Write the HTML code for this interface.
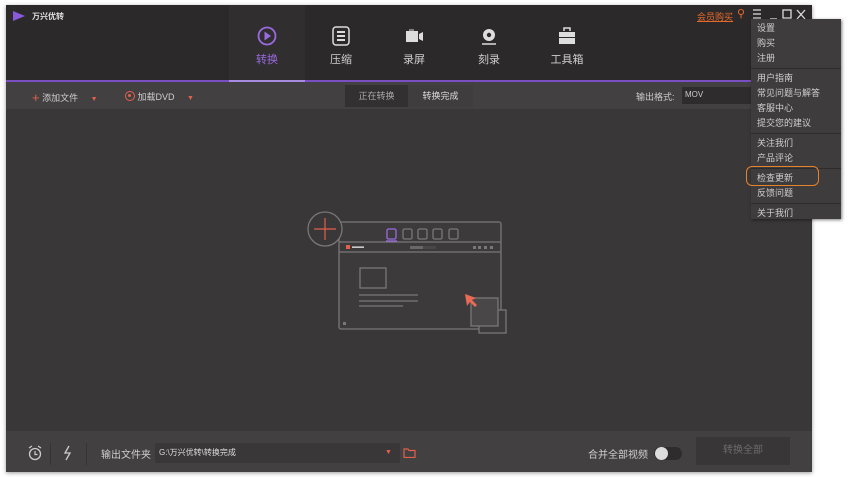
<!DOCTYPE html>
<html><head><meta charset="utf-8"><style>
*{margin:0;padding:0;box-sizing:border-box}
body{width:850px;height:477px;background:#fff;position:relative;overflow:hidden;font-family:"Liberation Sans","Noto Sans CJK SC",sans-serif;font-size:9px;color:#c8c6c7}
.abs{position:absolute}
#win{left:6px;top:5px;width:806px;height:467px;background:#3a3738;box-shadow:0 1px 4px rgba(0,0,0,.4)}
#title{left:6px;top:5px;width:806px;height:75px;background:#2c292b}
#tabact{left:229px;top:5px;width:76px;height:75px;background:#312e30}
#pline{left:6px;top:80px;width:806px;height:2px;background:#7b4fc4}
#pline2{left:229px;top:80px;width:76px;height:2px;background:#a78be0}
#tool{left:6px;top:82px;width:806px;height:27px;background:#434042}
.tab{position:absolute;top:25px;width:60px;text-align:center;font-size:11px;color:#cfcdce}
.tab svg{display:block;margin:0 auto 4px}
#bottom{left:6px;top:431px;width:806px;height:41px;background:#434042}
#menu{left:751px;top:19px;width:90px;height:200px;background:#3f3c3e;box-shadow:1px 1px 3px rgba(0,0,0,.5)}
#menu div{height:15px;line-height:15px;padding-left:6px;font-size:9px;color:#d0cecf}
#menu hr{border:0;border-top:1px solid #2e2b2d;margin:2px 0}
</style></head><body>
<div id="win" class="abs"></div>
<div id="title" class="abs"></div>
<div id="tabact" class="abs"></div>
<div id="pline" class="abs"></div>
<div id="pline2" class="abs"></div>
<div id="tool" class="abs"></div>
<div id="bottom" class="abs"></div>

<svg class="abs" style="left:12px;top:10px" width="14" height="12"><path d="M1 1L13 6L1 11Z" fill="#8a5ad8"/></svg>
<div class="abs" style="left:32px;top:11px;font-size:8px;font-weight:bold;color:#e0dedf">万兴优转</div>

<div class="tab" style="left:237px"><svg width="22" height="22" viewBox="0 0 22 22"><circle cx="11" cy="11" r="8.5" fill="none" stroke="#9a6ae0" stroke-width="1.8"/><path d="M8.5 6.5L15 11L8.5 15.5Z" fill="#9a6ae0"/></svg><span style="color:#9a6ae0">转换</span></div>
<div class="tab" style="left:311px"><svg width="22" height="22" viewBox="0 0 22 22"><rect x="3" y="2" width="16" height="18" rx="3" fill="none" stroke="#ddd" stroke-width="1.5"/><path d="M7 7h8M7 11h8M7 15h8" stroke="#ddd" stroke-width="2"/></svg>压缩</div>
<div class="tab" style="left:384px"><svg width="22" height="22" viewBox="0 0 22 22"><rect x="3" y="6" width="12" height="11" fill="#ddd"/><path d="M16 9l4-2v9l-4-2z" fill="#ddd"/><path d="M6 5h5" stroke="#ddd"/></svg>录屏</div>
<div class="tab" style="left:459px"><svg width="22" height="22" viewBox="0 0 22 22"><circle cx="11" cy="10" r="6" fill="#ddd"/><circle cx="11" cy="10" r="2.2" fill="#2c292b"/><path d="M4 19h14" stroke="#ddd" stroke-width="1.5"/></svg>刻录</div>
<div class="tab" style="left:537px"><svg width="22" height="22" viewBox="0 0 22 22"><path d="M8 6V3h6v3" fill="none" stroke="#ddd" stroke-width="1.5"/><rect x="3" y="7" width="16" height="5" fill="#ddd"/><rect x="3" y="13" width="16" height="6" fill="#ddd"/></svg>工具箱</div>

<div class="abs" style="left:697px;top:10px;font-size:9px;color:#e86a2a;text-decoration:underline">会员购买</div>
<div class="abs" style="left:737px;top:7px;font-size:11px;color:#e86a2a">⚲</div>
<svg class="abs" style="left:752px;top:9px" width="60" height="11"><path d="M1 1h8M1 5h8M1 9h8" stroke="#ddd" stroke-width="1.2"/><path d="M18 10h7" stroke="#ddd" stroke-width="1.5"/><rect x="31" y="1" width="8" height="8" fill="none" stroke="#ddd" stroke-width="1.3"/><path d="M45 1l8 9M53 1l-8 9" stroke="#ddd" stroke-width="1.3"/></svg>

<div class="abs" style="left:32px;top:90px;font-size:9px;color:#cfcdce"><span style="color:#e0604a;font-size:13px;vertical-align:-1px">+</span> 添加文件 <span style="color:#e0604a;margin-left:10px;font-size:7px">▼</span></div>
<div class="abs" style="left:125px;top:90px;font-size:9px;color:#cfcdce"><span style="color:#e0604a;display:inline-block;width:10px;height:10px;border:1.5px solid #e0604a;border-radius:50%;vertical-align:-1px;position:relative"><i style="position:absolute;left:2px;top:2px;width:3px;height:3px;background:#e0604a;border-radius:50%"></i></span> 加载DVD <span style="color:#e0604a;margin-left:10px;font-size:7px">▼</span></div>
<div class="abs" style="left:345px;top:85px;width:63px;height:22px;background:#333032;font-size:9px;line-height:22px;text-align:center;color:#aaa">正在转换</div>
<div class="abs" style="left:408px;top:85px;width:65px;height:22px;background:#403d3f;font-size:9px;line-height:22px;text-align:center;color:#ddd">转换完成</div>
<div class="abs" style="left:636px;top:90px;font-size:9px;color:#ccc">输出格式:</div>
<div class="abs" style="left:682px;top:87px;width:70px;height:17px;background:#2f2c2e;font-size:8px;line-height:15px;padding-left:3px;color:#ccc">MOV</div>

<svg class="abs" style="left:300px;top:205px" width="215" height="135" viewBox="0 0 215 135">
<g fill="none" stroke="#7a7778" stroke-width="1.3">
<rect x="39" y="17" width="162" height="107" rx="2" fill="#3d3a3b"/>
<path d="M39 37h162M39 47h162"/>
<rect x="60" y="63" width="26" height="20"/>
<path d="M59 90h59M59 96h59M59 101h44"/>
<rect x="87" y="24" width="9" height="10" rx="1.5" stroke="#9a6ae0"/>
<rect x="103" y="24" width="9" height="10" rx="1.5"/><rect x="118" y="24" width="9" height="10" rx="1.5"/><rect x="133" y="24" width="9" height="10" rx="1.5"/><rect x="149" y="24" width="9" height="10" rx="1.5"/>
<circle cx="25" cy="24" r="17" fill="#3a3738"/>
</g>
<rect x="179" y="105" width="27" height="23" fill="#3d3a3b" stroke="#7a7778" stroke-width="1.3"/>
<rect x="171" y="93" width="27" height="28" fill="#4a4748" stroke="#7a7778" stroke-width="1.3"/>
<path d="M86 36h11" stroke="#9a6ae0" stroke-width="1.3"/>
<path d="M25 13v22M14 24h22" stroke="#e0604a" stroke-width="1.2"/>
<rect x="46" y="40" width="4" height="4" fill="#e0604a"/><rect x="52" y="41.5" width="12" height="1.3" fill="#eee"/>
<rect x="110" y="41" width="13" height="3" fill="#6a6768"/><rect x="123" y="41" width="13" height="3" fill="#4a4748"/>
<g fill="#7a7778"><rect x="173" y="41" width="3" height="3"/><rect x="178" y="41" width="3" height="3"/><rect x="184" y="41" width="3" height="3"/><rect x="190" y="41" width="3" height="3"/><rect x="43" y="117" width="3" height="3"/></g>
<path d="M165 89l2 12 3-4 5 5 2-2-5-5 4-2z" fill="#e96a55"/>
</svg>

<svg class="abs" style="left:26px;top:445px" width="18" height="16"><circle cx="9" cy="9" r="5.5" fill="none" stroke="#ccc" stroke-width="1.3"/><path d="M9 6v3.5h2.5M3 3l3-2M15 3l-3-2" stroke="#ccc" stroke-width="1.2" fill="none"/></svg>
<div class="abs" style="left:50px;top:443px;width:1px;height:22px;background:#363335"></div>
<svg class="abs" style="left:63px;top:445px" width="10" height="16"><path d="M6 1L2 8h5L3 15" fill="none" stroke="#ccc" stroke-width="1.3"/></svg>
<div class="abs" style="left:86px;top:443px;width:1px;height:22px;background:#363335"></div>
<div class="abs" style="left:101px;top:446px;font-size:10px;color:#cfcdce">输出文件夹</div>
<div class="abs" style="left:155px;top:443px;width:245px;height:20px;background:#3a3738;font-size:8px;line-height:20px;padding-left:4px;color:#ddd">G:\万兴优转\转换完成</div>
<div class="abs" style="left:385px;top:449px;font-size:7px;color:#e0604a">▼</div>
<svg class="abs" style="left:403px;top:448px" width="13" height="10"><path d="M1 1h4l1 1.5h6v7H1z" fill="none" stroke="#e0604a" stroke-width="1.2"/></svg>
<div class="abs" style="left:588px;top:446px;font-size:10px;color:#cfcdce">合并全部视频</div>
<div class="abs" style="left:654px;top:447px;width:28px;height:13px;border-radius:7px;background:#2f2c2e"></div>
<div class="abs" style="left:655px;top:447px;width:13px;height:13px;border-radius:50%;background:#ddd"></div>
<div class="abs" style="left:696px;top:437px;width:94px;height:28px;background:#393637;font-size:10px;line-height:28px;text-align:center;color:#6e6b6c">转换全部</div>

<div id="menu" class="abs">
<div style="margin-top:2px">设置</div><div>购买</div><div>注册</div><hr>
<div>用户指南</div><div>常见问题与解答</div><div>客服中心</div><div>提交您的建议</div><hr>
<div>关注我们</div><div>产品评论</div><hr>
<div>检查更新</div><div>反馈问题</div><hr>
<div>关于我们</div>
</div>
<div class="abs" style="left:746px;top:166px;width:73px;height:20px;border:1.5px solid #e8822a;border-radius:6px"></div>
</body></html>
